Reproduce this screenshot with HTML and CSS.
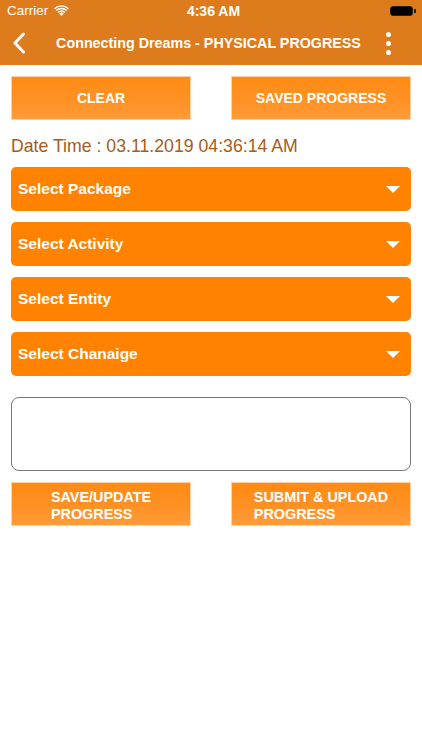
FILE: index.html
```html
<!DOCTYPE html>
<html lang="en">
<head>
    <meta charset="UTF-8">
    <meta name="viewport" content="width=device-width, initial-scale=1.0">
    <title>Physical Progress</title>
    <link rel="stylesheet" href="styles.css">
</head>
<body>
    <div class="topbar">
        <div class="status">
            <div class="carrier">Carrier
                <svg class="wifi" width="15" height="11" viewBox="0 0 15 11">
                    <path d="M7.5 11 L5.2 8.6 A3.3 3.3 0 0 1 9.8 8.6 Z" fill="#fff"/>
                    <path d="M3.6 6.9 A5.6 5.6 0 0 1 11.4 6.9 L10.3 8 A4.1 4.1 0 0 0 4.7 8 Z" fill="#fff"/>
                    <path d="M1.7 5 A8.3 8.3 0 0 1 13.3 5 L12.2 6.1 A6.8 6.8 0 0 0 2.8 6.1 Z" fill="#fff"/>
                    <path d="M0 3.2 A10.8 10.8 0 0 1 15 3.2 L14 4.2 A9.4 9.4 0 0 0 1 4.2 Z" fill="#fff"/>
                </svg>
            </div>
            <div class="clock">4:36 AM</div>
            <div class="battery"><span class="cell"></span><span class="tip"></span></div>
        </div>
        <div class="navbar">
            <svg class="back" width="14" height="22" viewBox="0 0 14 22">
                <path d="M11.5 2 L3 11 L11.5 20" fill="none" stroke="#fff" stroke-width="3" stroke-linecap="round" stroke-linejoin="round"/>
            </svg>
            <div class="title">Connecting Dreams - PHYSICAL PROGRESS</div>
            <div class="more"><span></span><span></span><span></span></div>
        </div>
    </div>

    <div class="content">
        <div class="btn-row top">
            <button class="btn">CLEAR</button>
            <button class="btn">SAVED PROGRESS</button>
        </div>

        <div class="datetime">Date Time : 03.11.2019 04:36:14 AM</div>

        <div class="picker">Select Package<span class="caret"></span></div>
        <div class="picker">Select Activity<span class="caret"></span></div>
        <div class="picker">Select Entity<span class="caret"></span></div>
        <div class="picker">Select Chanaige<span class="caret"></span></div>

        <textarea class="remarks"></textarea>

        <div class="btn-row bottom">
            <button class="btn"><span>SAVE/UPDATE<br>PROGRESS</span></button>
            <button class="btn"><span>SUBMIT &amp; UPLOAD<br>PROGRESS</span></button>
        </div>
    </div>
</body>
</html>
```

FILE: styles.css
```css
body {
    margin: 0;
    background: #fff;
    font-family: 'Liberation Sans', Arial, sans-serif;
    color: #fff;
}
.topbar {
    background: #de7b1d;
    height: 65px;
}
.status {
    height: 21px;
    display: flex;
    align-items: center;
    justify-content: space-between;
    padding: 0 6px 0 7px;
    font-size: 13.5px;
}
.carrier {
    display: flex;
    align-items: center;
    gap: 6px;
    width: 120px;
}
.clock {
    font-weight: bold;
    font-size: 14px;
    padding-left: 4px;
}
.battery {
    width: 120px;
    display: flex;
    justify-content: flex-end;
    align-items: center;
}
.battery .cell {
    width: 21px;
    height: 8px;
    background: #000;
    border: 1px solid #222;
    border-radius: 3px;
}
.battery .tip {
    width: 1.5px;
    height: 4px;
    background: #222;
    margin-left: 1px;
}
.navbar {
    height: 44px;
    display: flex;
    align-items: center;
    padding: 0 12px 0 12px;
}
.title {
    flex: 1;
    text-align: center;
    font-size: 14.3px;
    font-weight: bold;
    margin: 0 0 0 5px;
}
.more {
    display: flex;
    flex-direction: column;
    gap: 4px;
    padding-right: 19px;
}
.more span {
    width: 5px;
    height: 5px;
    border-radius: 50%;
    background: #fff;
}
.content {
    padding: 11px 11px 0 11px;
}
.btn-row {
    display: flex;
    justify-content: space-between;
}
.btn {
    width: 180px;
    height: 44px;
    border: none;
    background: linear-gradient(to bottom, #ff8a12 0%, #ff9226 60%, #ff9c3a 100%);
    color: #fff;
    font-family: 'Liberation Sans', Arial, sans-serif;
    font-weight: bold;
    font-size: 14px;
    padding: 0;
    display: flex;
    align-items: center;
    justify-content: center;
    text-align: left;
    line-height: 17px;
    box-shadow: 0 0 0 1px #ffd2a6 inset;
}
.bottom .btn {
    font-size: 14.4px;
    padding-top: 3px;
}
.datetime {
    color: #a85b18;
    font-size: 17.7px;
    height: 47px;
    display: flex;
    align-items: center;
    padding-top: 6px;
    box-sizing: border-box;
}
.picker {
    background: #ff8300;
    height: 44px;
    border-radius: 5px;
    margin-bottom: 11px;
    display: flex;
    align-items: center;
    justify-content: space-between;
    padding: 0 11px 0 7px;
    font-size: 15.5px;
    font-weight: bold;
}
.caret {
    width: 0;
    height: 0;
    border-left: 7px solid transparent;
    border-right: 7px solid transparent;
    border-top: 7px solid #fff;
}
.remarks {
    display: block;
    box-sizing: border-box;
    width: 100%;
    height: 74px;
    margin-top: 21px;
    border: 1px solid #777;
    border-radius: 8px;
    resize: none;
}
.bottom {
    margin-top: 11px;
}
```
